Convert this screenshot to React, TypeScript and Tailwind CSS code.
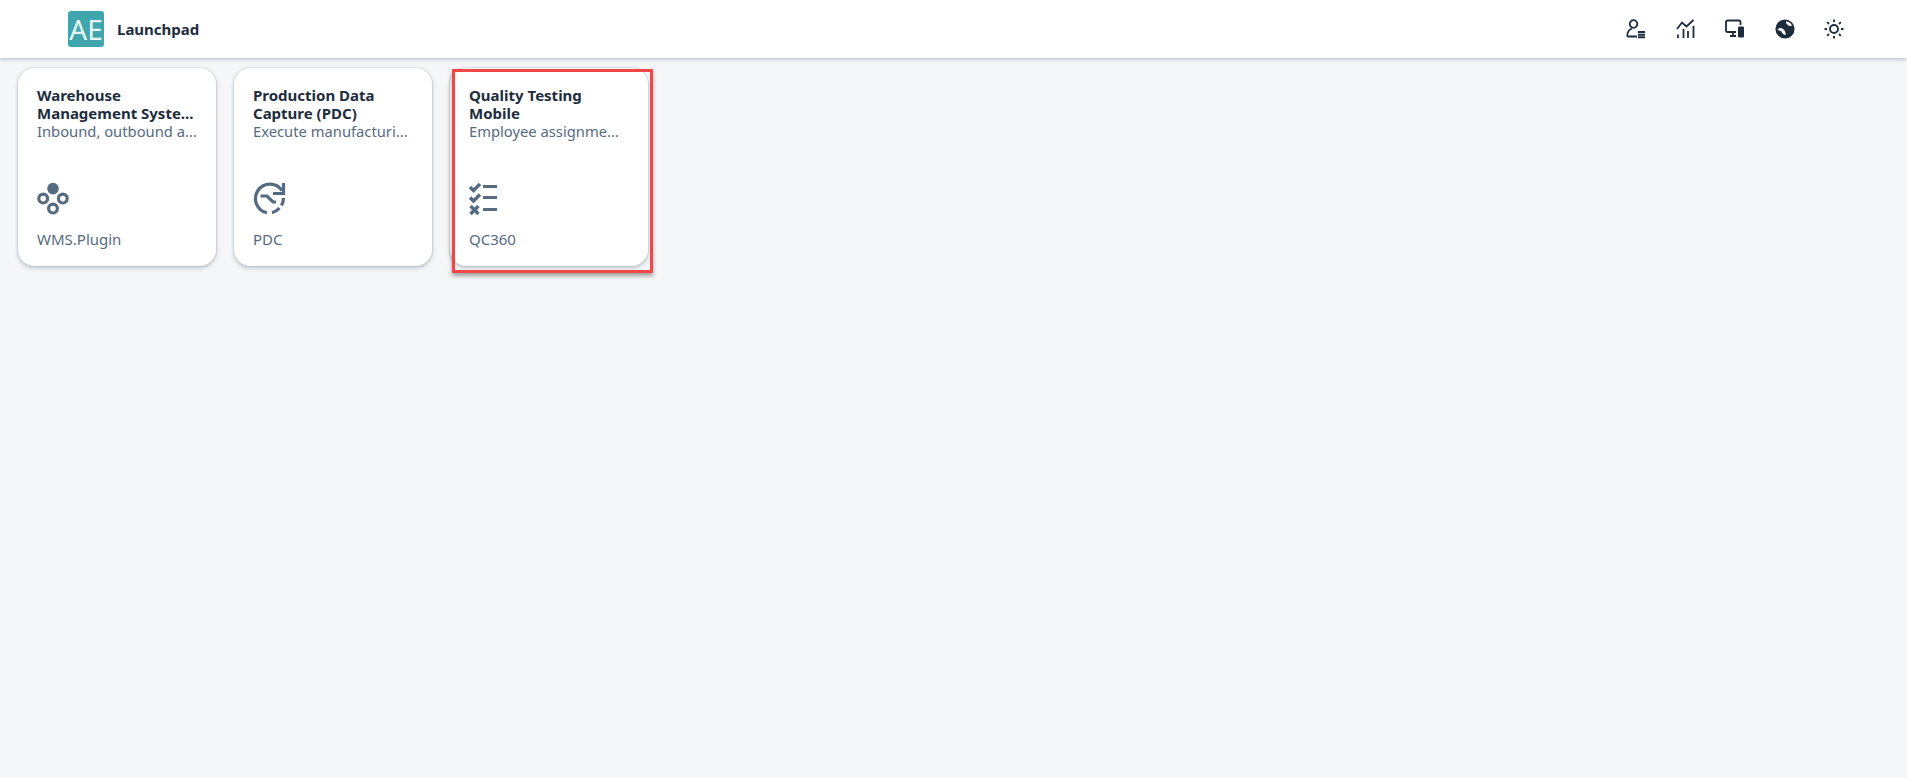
const font = { fontFamily: '"Noto Sans", "Open Sans", Arial, sans-serif' };

function Wms() {
  return (
    <svg width="34" height="34" viewBox="0 0 34 34" fill="none" stroke="#556b82" strokeWidth="3.2">
      <circle cx="17" cy="6.6" r="5.8" fill="#556b82" stroke="none" />
      <circle cx="7.2" cy="16.6" r="4.4" />
      <circle cx="26.8" cy="16.6" r="4.4" />
      <circle cx="17" cy="26.6" r="4.4" />
    </svg>
  );
}

function Pdc() {
  return (
    <svg width="34" height="34" viewBox="0 0 34 34" fill="none" stroke="#556b82" strokeWidth="3.2">
      <path d="M30 8.5 A14.5 14.5 0 1 0 15 30.8" />
      <path d="M31.5 1 V11.5 H21" />
      <path d="M8.5 14 H15 L21 20 H24" />
      <path d="M31.5 16 A14.5 14.5 0 0 1 29.5 23.5" />
      <path d="M27.5 26 A14.5 14.5 0 0 1 20 30.6" />
    </svg>
  );
}

function Checks() {
  return (
    <svg width="30" height="34" viewBox="0 0 30 34" fill="none" stroke="#556b82">
      <path d="M2 5 L5.5 8.5 L12 2" strokeWidth="3.4" />
      <path d="M2 15.5 L5.5 19 L12 12.5" strokeWidth="3.4" />
      <path d="M2.5 24 L10.5 32 M10.5 24 L2.5 32" strokeWidth="3.4" />
      <path d="M15 4.5 H29 M15 15.5 H29 M15 27.5 H29" strokeWidth="3" />
    </svg>
  );
}

function Card({ title, sub, foot, icon, marked }: { title: string[]; sub: string; foot: string; icon: React.ReactNode; marked?: boolean }) {
  return (
    <div className="relative w-[198px] h-[198px] bg-white rounded-2xl px-[19px] pt-[18px] shadow-[0_0_0_1px_rgba(85,107,130,0.12),0_2px_4px_rgba(85,107,130,0.35)] flex flex-col">
      <div className="text-[15px] leading-[18px] font-bold text-[#1d2d3e]">
        {title.map((t) => (
          <div key={t} className="whitespace-nowrap">{t}</div>
        ))}
      </div>
      <div className="text-[14.75px] leading-[18px] text-[#556b82] whitespace-nowrap">{sub}</div>
      <div className="mt-[42px] h-[34px] -ml-px">{icon}</div>
      <div className="mt-[14px] text-[15px] leading-[18px] text-[#556b82]">{foot}</div>
      {marked && (
        <div className="absolute left-[2px] top-[1px] w-[201px] h-[204px] border-[3px] border-[#f44647] shadow-[0_3px_4px_rgba(0,0,0,0.35)] pointer-events-none" />
      )}
    </div>
  );
}

function UserList() {
  return (
    <svg width="20" height="20" viewBox="0 0 20 20" fill="none" stroke="#1d2d3e" strokeWidth="1.8">
      <circle cx="7.5" cy="5" r="3.8" />
      <path d="M1.2 17.5 C1.2 13 3 10.5 6 9.5 M1.2 17.5 H11" />
      <path d="M12 13 H19 M12 15.7 H19 M12 18.2 H19" strokeWidth="1.9" />
    </svg>
  );
}
function Chart() {
  return (
    <svg width="20" height="20" viewBox="0 0 20 20" fill="none" stroke="#1d2d3e" strokeWidth="1.8">
      <path d="M1 10 L6 3.5 L10.5 7.5 L17.5 1" />
      <path d="M2 15.5 V19 M7.5 10 V19 M12 12 V19 M17.5 7 V19" />
    </svg>
  );
}
function Devices() {
  return (
    <svg width="20" height="20" viewBox="0 0 20 20" fill="none" stroke="#1d2d3e" strokeWidth="1.8">
      <path d="M11 13 H2.5 Q1 13 1 11.5 V3 Q1 1.5 2.5 1.5 H14 Q15.5 1.5 15.5 3 V6" />
      <path d="M5 17 H11 M8 13 V17" />
      <rect x="13" y="7.5" width="6" height="11" rx="1" fill="#1d2d3e" stroke="none" />
    </svg>
  );
}
function Globe() {
  return (
    <svg width="20" height="20" viewBox="0 0 20 20">
      <circle cx="10" cy="10" r="9.6" fill="#1d2d3e" />
      <path d="M2.5 10.5 C5 8 6.5 9 8 10 C10 11 10 13 11 15.5 C9 16.5 7 14 6.5 12.5 C5.5 11.5 3.5 11.5 2.5 10.5 Z M11 2.5 C13 2.5 16 4 17 6.5 C15 7.5 13.5 7 12.5 5.5 C11.5 5 11 4 11 2.5 Z" fill="#fff" />
    </svg>
  );
}
function Sun() {
  return (
    <svg width="20" height="20" viewBox="0 0 20 20" fill="none" stroke="#1d2d3e" strokeWidth="1.9">
      <circle cx="10" cy="10" r="4" />
      <path d="M10 0.5 V3 M10 17 V19.5 M0.5 10 H3 M17 10 H19.5 M3.2 3.2 L5 5 M15 15 L16.8 16.8 M3.2 16.8 L5 15 M15 5 L16.8 3.2" />
    </svg>
  );
}

export default function App() {
  return (
    <div style={font} className="w-full min-h-[778px] bg-[#f5f6f7]">
      <header className="relative h-[58px] bg-white shadow-[0_1px_4px_rgba(85,107,130,0.45)] flex items-center pl-[68px] pr-[63px]">
        <div className="w-[36px] h-[36px] rounded-[3px] bg-[#3fa6ad] text-[#e6f5f6] text-[28px] leading-[36px] text-center font-normal">AE</div>
        <div className="ml-[13px] text-[15px] font-bold text-[#1d2d3e]">Launchpad</div>
        <div className="ml-auto flex items-center gap-[29.5px]">
          <UserList />
          <Chart />
          <Devices />
          <Globe />
          <Sun />
        </div>
      </header>
      <main className="flex gap-[18px] pl-[18px] pt-[10px]">
        <Card title={["Warehouse", "Management Syste..."]} sub="Inbound, outbound a..." foot="WMS.Plugin" icon={<Wms />} />
        <Card title={["Production Data", "Capture (PDC)"]} sub="Execute manufacturi..." foot="PDC" icon={<Pdc />} />
        <Card title={["Quality Testing", "Mobile"]} sub="Employee assignme..." foot="QC360" icon={<Checks />} marked />
      </main>
    </div>
  );
}
